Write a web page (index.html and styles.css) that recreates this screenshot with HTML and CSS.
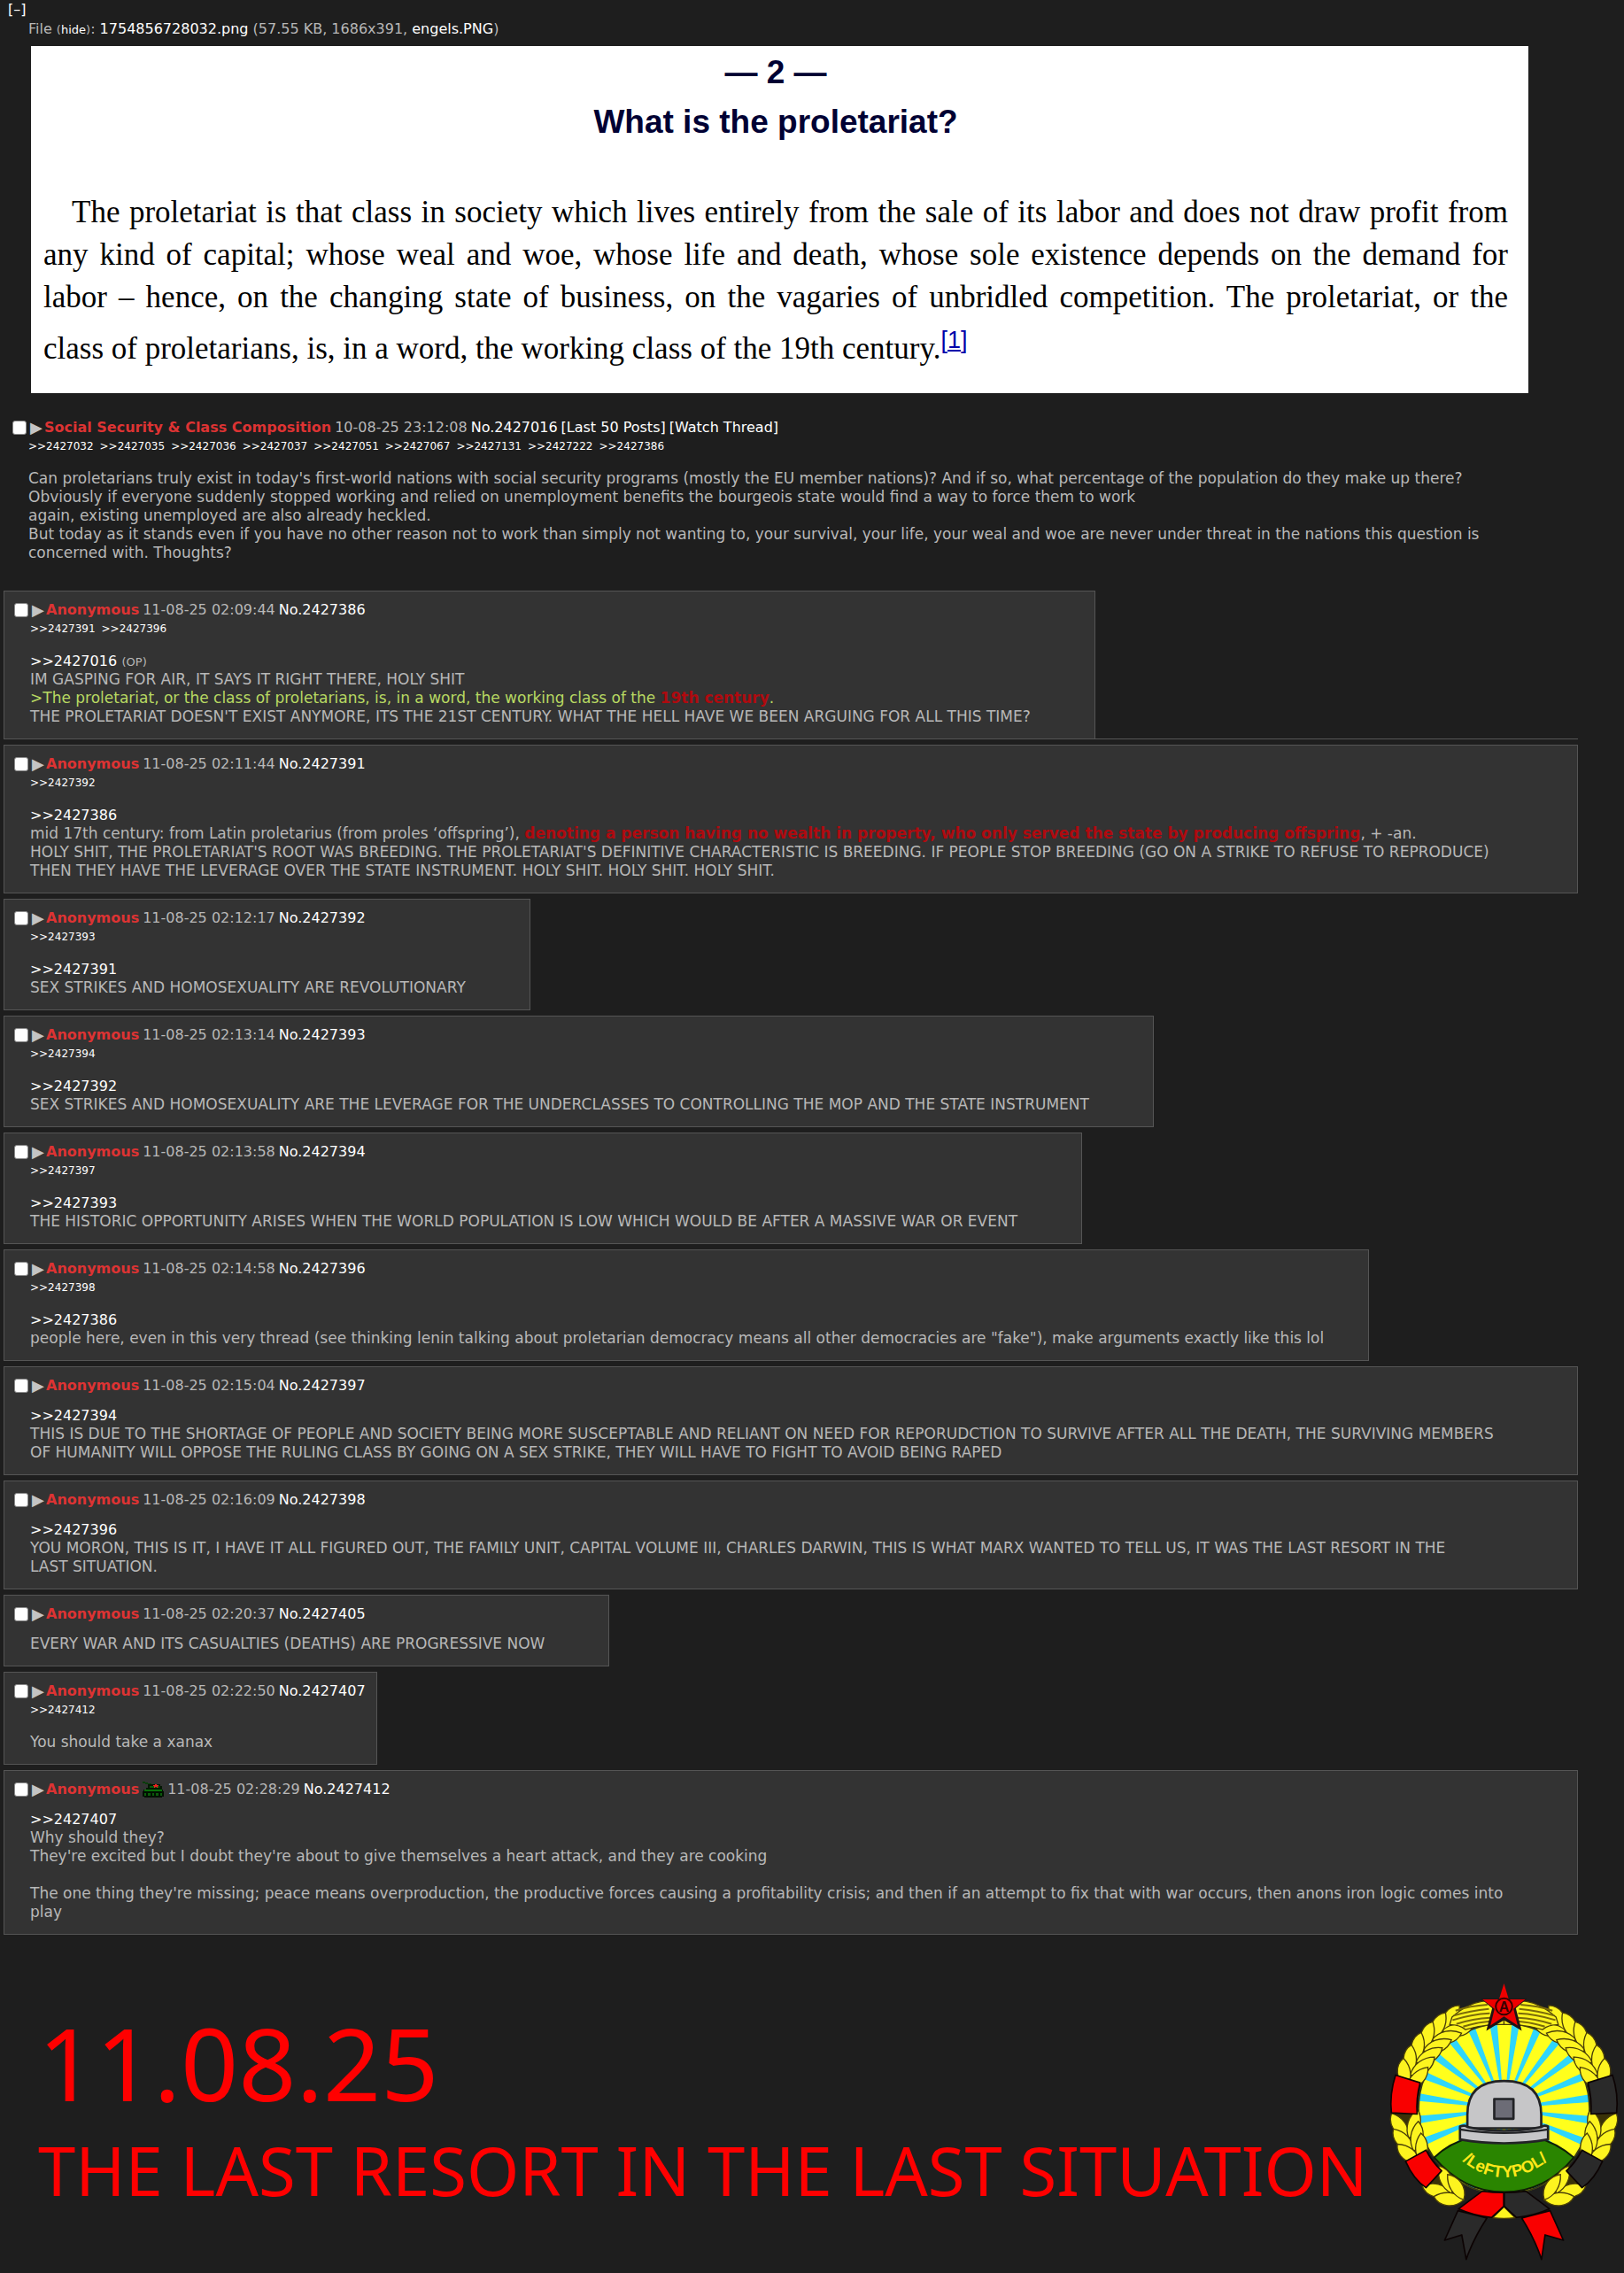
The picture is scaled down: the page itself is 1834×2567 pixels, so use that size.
FILE: index.html
```
<!DOCTYPE html>
<html lang="en">
<head>
    <meta charset="UTF-8">
    <title>Social Security &amp; Class Composition</title>
    <link rel="stylesheet" href="styles.css">
</head>
<body>
    <main class="thread">
        <a class="collapse" href="#">[–]</a>
        <p class="fileinfo">File <small>(<a href="#">hide</a>)</small>: <a href="#">1754856728032.png</a> (57.55 KB, 1686x391, <a href="#">engels.PNG</a>)</p>

        <figure class="attachment">
            <h2>— 2 —<br>What is the proletariat?</h2>
            <p>The proletariat is that class in society which lives entirely from the sale of its labor and does not draw profit from any kind of capital; whose weal and woe, whose life and death, whose sole existence depends on the demand for labor – hence, on the changing state of business, on the vagaries of unbridled competition. The proletariat, or the <span class="nowrap">class of proletarians,</span> is, in a word, the working class of the 19th century.<sup>[<a href="#">1</a>]</sup></p>
        </figure>

        <article class="op">
            <header class="intro">
                <input type="checkbox" aria-label="Select post 2427016">
                <a class="menu" href="#" aria-label="Post menu">▶</a>
                <span class="name">Social Security &amp; Class Composition</span>
                <time>10-08-25 23:12:08</time>
                <a href="#">No.2427016</a>
                <a href="#">[Last 50 Posts]</a>
                <a href="#">[Watch Thread]</a>
            </header>
            <nav class="backlinks">
                <a href="#">&gt;&gt;2427032</a>
                <a href="#">&gt;&gt;2427035</a>
                <a href="#">&gt;&gt;2427036</a>
                <a href="#">&gt;&gt;2427037</a>
                <a href="#">&gt;&gt;2427051</a>
                <a href="#">&gt;&gt;2427067</a>
                <a href="#">&gt;&gt;2427131</a>
                <a href="#">&gt;&gt;2427222</a>
                <a href="#">&gt;&gt;2427386</a>
            </nav>
            <div class="body">
                Can proletarians truly exist in today's first-world nations with social security programs (mostly the EU member nations)? And if so, what percentage of the population do they make up there?<br>
                Obviously if everyone suddenly stopped working and relied on unemployment benefits the bourgeois state would find a way to force them to work<br>
                again, existing unemployed are also already heckled.<br>
                But today as it stands even if you have no other reason not to work than simply not wanting to, your survival, your life, your weal and woe are never under threat in the nations this question is concerned with. Thoughts?
            </div>
        </article>

        <div class="ruled">
            <article class="post shout">
                <header class="intro">
                    <input type="checkbox" aria-label="Select post 2427386">
                    <a class="menu" href="#" aria-label="Post menu">▶</a>
                    <span class="name">Anonymous</span>
                    <time>11-08-25 02:09:44</time>
                    <a href="#">No.2427386</a>
                </header>
                <nav class="backlinks">
                    <a href="#">&gt;&gt;2427391</a>
                    <a href="#">&gt;&gt;2427396</a>
                </nav>
                <div class="body">
                    <a href="#">&gt;&gt;2427016</a> <small>(OP)</small><br>
                    IM GASPING FOR AIR, IT SAYS IT RIGHT THERE, HOLY SHIT<br>
                    <span class="quote">&gt;The proletariat, or the class of proletarians, is, in a word, the working class of the <strong>19th century</strong>.</span><br>
                    THE PROLETARIAT DOESN'T EXIST ANYMORE, ITS THE 21ST CENTURY. WHAT THE HELL HAVE WE BEEN ARGUING FOR ALL THIS TIME?
                </div>
            </article>
        </div>

        <article class="post wide">
            <header class="intro">
                <input type="checkbox" aria-label="Select post 2427391">
                <a class="menu" href="#" aria-label="Post menu">▶</a>
                <span class="name">Anonymous</span>
                <time>11-08-25 02:11:44</time>
                <a href="#">No.2427391</a>
            </header>
            <nav class="backlinks">
                <a href="#">&gt;&gt;2427392</a>
            </nav>
            <div class="body">
                <a href="#">&gt;&gt;2427386</a><br>
                mid 17th century: from Latin proletarius (from proles ‘offspring’), <strong>denoting a person having no wealth in property, who only served the state by producing offspring</strong>, + -an.<br>
                HOLY SHIT, THE PROLETARIAT'S ROOT WAS BREEDING. THE PROLETARIAT'S DEFINITIVE CHARACTERISTIC IS BREEDING. IF PEOPLE STOP BREEDING (GO ON A STRIKE TO REFUSE TO REPRODUCE)<br>
                THEN THEY HAVE THE LEVERAGE OVER THE STATE INSTRUMENT. HOLY SHIT. HOLY SHIT. HOLY SHIT.
            </div>
        </article>

        <article class="post shout">
            <header class="intro">
                <input type="checkbox" aria-label="Select post 2427392">
                <a class="menu" href="#" aria-label="Post menu">▶</a>
                <span class="name">Anonymous</span>
                <time>11-08-25 02:12:17</time>
                <a href="#">No.2427392</a>
            </header>
            <nav class="backlinks">
                <a href="#">&gt;&gt;2427393</a>
            </nav>
            <div class="body">
                <a href="#">&gt;&gt;2427391</a><br>
                SEX STRIKES AND HOMOSEXUALITY ARE REVOLUTIONARY
            </div>
        </article>

        <article class="post shout">
            <header class="intro">
                <input type="checkbox" aria-label="Select post 2427393">
                <a class="menu" href="#" aria-label="Post menu">▶</a>
                <span class="name">Anonymous</span>
                <time>11-08-25 02:13:14</time>
                <a href="#">No.2427393</a>
            </header>
            <nav class="backlinks">
                <a href="#">&gt;&gt;2427394</a>
            </nav>
            <div class="body">
                <a href="#">&gt;&gt;2427392</a><br>
                SEX STRIKES AND HOMOSEXUALITY ARE THE LEVERAGE FOR THE UNDERCLASSES TO CONTROLLING THE MOP AND THE STATE INSTRUMENT
            </div>
        </article>

        <article class="post shout">
            <header class="intro">
                <input type="checkbox" aria-label="Select post 2427394">
                <a class="menu" href="#" aria-label="Post menu">▶</a>
                <span class="name">Anonymous</span>
                <time>11-08-25 02:13:58</time>
                <a href="#">No.2427394</a>
            </header>
            <nav class="backlinks">
                <a href="#">&gt;&gt;2427397</a>
            </nav>
            <div class="body">
                <a href="#">&gt;&gt;2427393</a><br>
                THE HISTORIC OPPORTUNITY ARISES WHEN THE WORLD POPULATION IS LOW WHICH WOULD BE AFTER A MASSIVE WAR OR EVENT
            </div>
        </article>

        <article class="post">
            <header class="intro">
                <input type="checkbox" aria-label="Select post 2427396">
                <a class="menu" href="#" aria-label="Post menu">▶</a>
                <span class="name">Anonymous</span>
                <time>11-08-25 02:14:58</time>
                <a href="#">No.2427396</a>
            </header>
            <nav class="backlinks">
                <a href="#">&gt;&gt;2427398</a>
            </nav>
            <div class="body">
                <a href="#">&gt;&gt;2427386</a><br>
                people here, even in this very thread (see thinking lenin talking about proletarian democracy means all other democracies are "fake"), make arguments exactly like this lol
            </div>
        </article>

        <article class="post wide">
            <header class="intro">
                <input type="checkbox" aria-label="Select post 2427397">
                <a class="menu" href="#" aria-label="Post menu">▶</a>
                <span class="name">Anonymous</span>
                <time>11-08-25 02:15:04</time>
                <a href="#">No.2427397</a>
            </header>
            <div class="body">
                <a href="#">&gt;&gt;2427394</a><br>
                THIS IS DUE TO THE SHORTAGE OF PEOPLE AND SOCIETY BEING MORE SUSCEPTABLE AND RELIANT ON NEED FOR REPORUDCTION TO SURVIVE AFTER ALL THE DEATH, THE SURVIVING MEMBERS<br>
                OF HUMANITY WILL OPPOSE THE RULING CLASS BY GOING ON A SEX STRIKE, THEY WILL HAVE TO FIGHT TO AVOID BEING RAPED
            </div>
        </article>

        <article class="post wide">
            <header class="intro">
                <input type="checkbox" aria-label="Select post 2427398">
                <a class="menu" href="#" aria-label="Post menu">▶</a>
                <span class="name">Anonymous</span>
                <time>11-08-25 02:16:09</time>
                <a href="#">No.2427398</a>
            </header>
            <div class="body">
                <a href="#">&gt;&gt;2427396</a><br>
                YOU MORON, THIS IS IT, I HAVE IT ALL FIGURED OUT, THE FAMILY UNIT, CAPITAL VOLUME III, CHARLES DARWIN, THIS IS WHAT MARX WANTED TO TELL US, IT WAS THE LAST RESORT IN THE<br>
                LAST SITUATION.
            </div>
        </article>

        <article class="post shout">
            <header class="intro">
                <input type="checkbox" aria-label="Select post 2427405">
                <a class="menu" href="#" aria-label="Post menu">▶</a>
                <span class="name">Anonymous</span>
                <time>11-08-25 02:20:37</time>
                <a href="#">No.2427405</a>
            </header>
            <div class="body">
                EVERY WAR AND ITS CASUALTIES (DEATHS) ARE PROGRESSIVE NOW
            </div>
        </article>

        <article class="post">
            <header class="intro">
                <input type="checkbox" aria-label="Select post 2427407">
                <a class="menu" href="#" aria-label="Post menu">▶</a>
                <span class="name">Anonymous</span>
                <time>11-08-25 02:22:50</time>
                <a href="#">No.2427407</a>
            </header>
            <nav class="backlinks">
                <a href="#">&gt;&gt;2427412</a>
            </nav>
            <div class="body">
                You should take a xanax
            </div>
        </article>

        <article class="post wide">
            <header class="intro">
                <input type="checkbox" aria-label="Select post 2427412">
                <a class="menu" href="#" aria-label="Post menu">▶</a>
                <span class="name">Anonymous</span>
                <svg class="flag" viewBox="0 0 24 18" shape-rendering="crispEdges" aria-label="Tank">
                    <path d="M0 0h3v1h3v1h4v2H7V3H3V2H0z" fill="#0a3d0a"/>
                    <path d="M6 3h14v2h2v4H4V7h2z" fill="#041804"/>
                    <path d="M8 5h11v2H8z" fill="#0b5a0b"/>
                    <path d="M14 3h2v1h2v1h-1v2h-1V6h-2v1h-1V5h-1V4h2z" fill="#f02020"/>
                    <path d="M1 9h22v2h1v6h-2v1H2v-1H0v-6h1z" fill="#001000"/>
                    <path d="M2 9h20v2H2z" fill="#087008"/>
                    <path d="M2 13h2v3H2zM6 13h3v3H6zM11 13h2v3h-2zM15 13h3v3h-3zM20 13h2v3h-2z" fill="#0b5a0b"/>
                </svg>
                <time>11-08-25 02:28:29</time>
                <a href="#">No.2427412</a>
            </header>
            <div class="body">
                <a href="#">&gt;&gt;2427407</a><br>
                Why should they?<br>
                They're excited but I doubt they're about to give themselves a heart attack, and they are cooking<br>
                <br>
                The one thing they're missing; peace means overproduction, the productive forces causing a profitability crisis; and then if an attempt to fix that with war occurs, then anons iron logic comes into<br>
                play
            </div>
        </article>
    </main>

    <footer class="banner">
        <div class="slogan">
            <p class="date">11.08.25</p>
            <p class="title">THE LAST RESORT IN THE LAST SITUATION</p>
        </div>
        <svg class="emblem" viewBox="85 60 785 950" aria-label="Leftypol emblem">
            <defs>
                <g id="leaf">
                    <path d="M142 538C94 524 80 476 98 446C134 464 152 500 142 538z"/>
                    <path d="M142 538C190 524 200 476 186 446C152 464 134 500 142 538z"/>
                </g>
                <!-- left half of the wreath, the right half is its mirror -->
                <g id="wheat">
                    <g fill="#fdf41f" stroke="#4a3f08" stroke-width="4">
                        <use href="#leaf" transform="rotate(60 476 490)"/>
                        <use href="#leaf" transform="rotate(52 476 490)"/>
                        <use href="#leaf" transform="rotate(44 476 490)"/>
                        <use href="#leaf" transform="rotate(36 476 490)"/>
                        <use href="#leaf" transform="rotate(28 476 490)"/>
                        <use href="#leaf" transform="rotate(20 476 490)"/>
                        <use href="#leaf" transform="rotate(-9 476 490)"/>
                        <use href="#leaf" transform="rotate(-17 476 490)"/>
                        <use href="#leaf" transform="rotate(-25 476 490)"/>
                        <use href="#leaf" transform="rotate(-50 476 490)"/>
                        <use href="#leaf" transform="rotate(-58 476 490)"/>
                    </g>
                    <path d="M300 180Q350 135 400 127L476 120V205Q410 203 345 222Q325 205 292 206z" fill="#fdf41f" stroke="#4a3f08" stroke-width="4"/>
                    <path d="M312 158Q360 142 420 138M306 175Q360 158 425 152M302 190Q365 170 428 167M315 203Q370 185 430 182M338 212Q380 198 430 194" fill="none" stroke="#7a6a0a" stroke-width="6"/>
                </g>
                <path id="arc" d="M306 640Q470 804 655 642"/>
            </defs>

            <!-- sun rays -->
            <circle cx="476" cy="490" r="290" fill="#ffff1c"/>
            <circle cx="476" cy="490" r="145" fill="none" stroke="#2fd6fb" stroke-width="290" pathLength="72" stroke-dasharray="1 2" stroke-dashoffset="-1"/>
            <circle cx="476" cy="490" r="289" fill="none" stroke="#3b3a14" stroke-width="5"/>

            <path d="M240 655Q290 605 370 585H580Q655 605 712 655Q615 772 476 772Q340 772 240 655z" fill="#2a8500" stroke="#0e1e06" stroke-width="6"/>

            <!-- wreath -->
            <circle cx="476" cy="490" r="334" fill="none" stroke="#3a3208" stroke-width="62" pathLength="360" stroke-dasharray="60 60 240 0"/>
            <use href="#wheat"/>
            <use href="#wheat" transform="translate(952 0) scale(-1 1)"/>
            <path d="M438 859L476 822L513 859Q476 864 438 859z" fill="#fdf41f" stroke="#4a3f08" stroke-width="4"/>

            <!-- ribbons -->
            <g stroke="#0c0303" stroke-width="5" stroke-linejoin="round">
                <g fill="#f90000">
                    <path d="M109 376L192 402Q178 455 182 508L95 504Q88 440 109 376z"/>
                    <path d="M143 668L212 630Q233 672 265 700L212 757Q170 730 143 668z"/>
                    <path d="M322 829L402 769Q440 774 475 774V820L434 858Q375 853 322 829z"/>
                    <path d="M536 860L632 835L677 935L615 917L603 1000Q580 930 536 860z"/>
                </g>
                <g fill="#2a2a2a">
                    <path d="M843 376L760 402Q774 455 770 508L857 504Q864 440 843 376z"/>
                    <path d="M809 668L740 630Q719 672 687 700L740 757Q782 730 809 668z"/>
                    <path d="M630 829L550 769Q512 774 477 774V820L518 858Q577 853 630 829z"/>
                    <path d="M418 860L320 835L275 935L333 917L348 1000Q372 930 418 860z"/>
                </g>
            </g>

            <!-- helmet -->
            <g stroke="#222326" stroke-width="8" stroke-linejoin="round">
                <path d="M352 556V510Q352 396 476 396Q602 396 602 510V556z" fill="#c6c6c8"/>
                <path d="M327 550Q345 544 352 552Q476 578 602 552Q612 544 625 550V594Q476 620 327 594z" fill="#c6c6c8"/>
                <path d="M327 560Q476 584 625 560" fill="none" stroke-width="7"/>
                <path d="M443 457H508V524H443z" fill="#6c6c76"/>
            </g>

            <!-- star -->
            <path d="M398 118L436 150L416 226L476 190L536 226L516 150L554 118z" fill="#1f1314"/>
            <path d="M476 66L492 120H548L508 152L522 208L476 178L430 208L444 152L403 120H459z" fill="#ee0000"/>
            <circle cx="476" cy="144" r="28" fill="none" stroke="#3b0000" stroke-width="6"/>
            <text class="star-letter" x="476" y="162">A</text>

            <text class="label"><textPath href="#arc" startOffset="50%">/LeFTYPOL/</textPath></text>
        </svg>
    </footer>
</body>
</html>
```
FILE: styles.css
```
body {
    background: #1e1e1e;
    color: #b8b8b8;
    font-family: Verdana, "DejaVu Sans", sans-serif;
    font-size: 16px;
    line-height: 21px;
    margin: 0;
}

a {
    color: #fff;
    text-decoration: none;
}

p, h2, figure {
    margin: 0;
}

small {
    font-size: 13px;
    line-height: 16px;
}

.nowrap {
    white-space: nowrap;
}

.collapse {
    display: block;
    margin-left: 9px;
    line-height: 22px;
}

.fileinfo {
    margin-left: 32px;
}

/* scanned text attached to the first post */
.attachment {
    margin: 9px 108px 28px 35px;
    padding: 2px 23px 26px 14px;
    background: #fff;
    color: #000;
    font: 35px/48px Georgia, "Liberation Serif", serif;
}

.attachment h2 {
    margin-bottom: 50px;
    color: #000033;
    font: bold 37px/56px "Liberation Sans", sans-serif;
    text-align: center;
}

.attachment p {
    text-align: justify;
    text-indent: 32px;
}

.attachment sup {
    color: #0000aa;
    font: 27px/48px "Liberation Sans", sans-serif;
    vertical-align: 12px;
}

.attachment sup a {
    color: #0000aa;
    text-decoration: underline;
}

/* posts */
.op {
    margin: 0 130px 32px 0;
    padding-left: 14px;
}

.post {
    box-sizing: border-box;
    width: fit-content;
    margin: 0 52px 6px 4px;
    padding: 10px 0 14px 11px;
    background: #333;
    border: 1px solid #555;
}

.post.wide {
    width: auto;
}

.ruled {
    margin: 0 52px 6px 4px;
    border-bottom: 1px solid #555;
}

.ruled .post {
    margin: 0;
    border-bottom: none;
}

.intro {
    display: flex;
    align-items: center;
    gap: 4px;
    height: 21px;
    padding-right: 12px;
}

.intro input {
    appearance: none;
    width: 16px;
    height: 16px;
    margin: 0;
    background: #fff;
    border: 1px solid #8a8a8a;
    border-radius: 3px;
}

.intro .menu {
    width: 12px;
    color: #c4c4c4;
    font-size: 18px;
}

.name {
    color: #dd3333;
    font-weight: bold;
}

.flag {
    width: 24px;
    height: 18px;
}

.backlinks {
    display: flex;
    gap: 7px;
    margin-left: 18px;
    font-size: 12px;
    line-height: 23px;
}

.body {
    margin: 14px 50px 0 18px;
    font-size: 17px;
}

.intro + .body {
    margin-top: 13px;
}

.shout .body {
    margin-right: 72px;
}

.op .body {
    margin-right: 0;
}

.body a {
    font-size: 16px;
    line-height: 16px;
}

.quote {
    color: #b8d962;
}

.body strong {
    color: #af0a0f;
}

/* footer */
.banner {
    display: flex;
    justify-content: space-between;
    padding: 47px 4px 10px 43px;
}

.slogan {
    padding-top: 31px;
    color: #f00;
    font-family: "Noto Sans", sans-serif;
    white-space: nowrap;
}

.date {
    font-size: 114px;
    line-height: 120px;
}

.title {
    font-size: 76px;
    line-height: 124px;
}

.emblem {
    flex: none;
    width: 262px;
    height: 317px;
}

.star-letter {
    fill: #3b0000;
    font: bold 48px "Liberation Sans", sans-serif;
    text-anchor: middle;
}

.label {
    fill: #ffe81a;
    font: bold 56px "Liberation Sans", sans-serif;
    text-anchor: middle;
}
```
